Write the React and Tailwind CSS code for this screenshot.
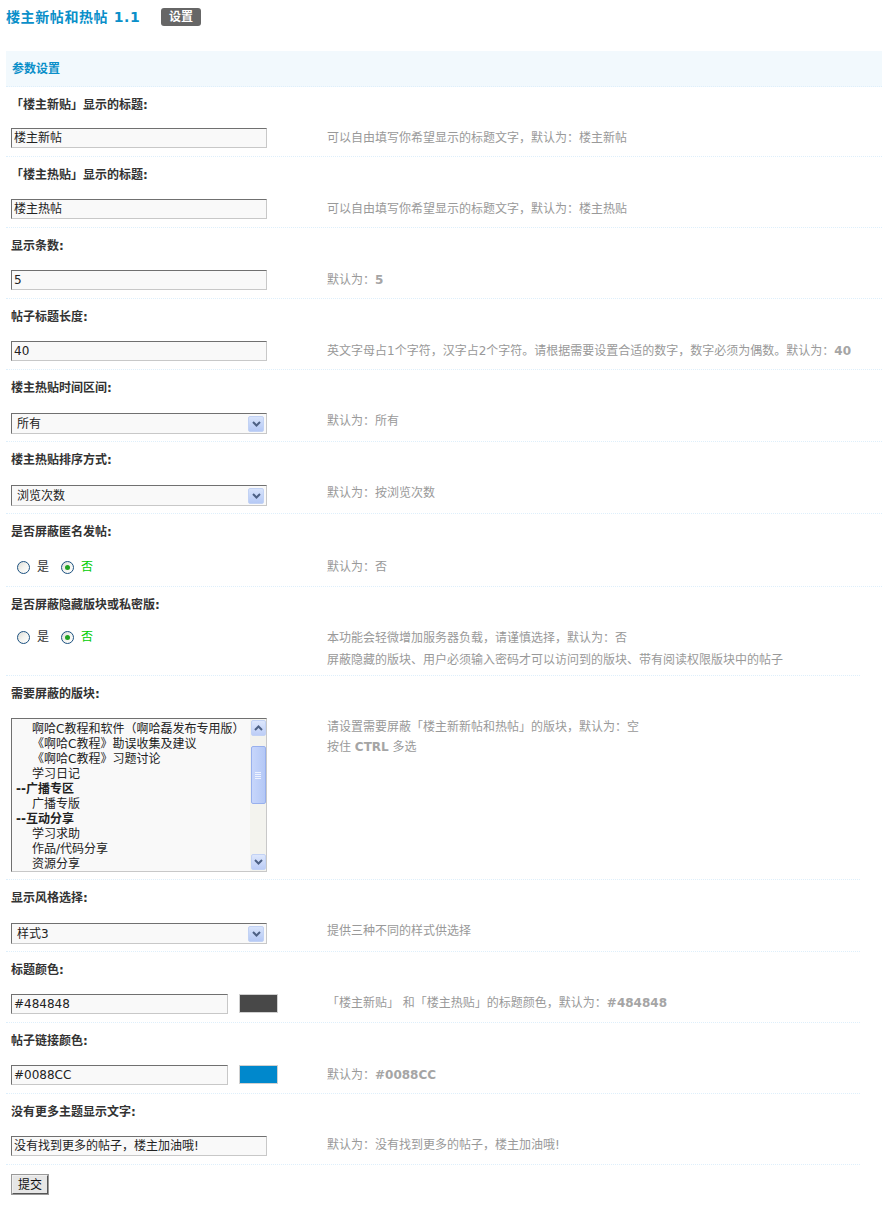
import React from "react";

const FONT = "[font-family:'DejaVu_Sans','Noto_Sans_CJK_SC',sans-serif]";

function Label({ children }) {
  return (
    <div className="h-[35px] flex items-center pl-[5px] font-bold text-[#333] text-[12px]">
      {children}
    </div>
  );
}

function TextInput({ value, w = "w-[256px]" }) {
  return (
    <div
      className={`${w} h-[20px] bg-[#f9f9f9] border border-t-[#707070] border-l-[#707070] border-b-[#c8c8c8] border-r-[#c8c8c8] pl-[2px] flex items-center text-[12px] text-[#222] leading-none overflow-hidden whitespace-nowrap`}
    >
      {value}
    </div>
  );
}

function SelectBox({ value }) {
  return (
    <div className="w-[256px] h-[21px] bg-[#f9f9f9] border border-t-[#707070] border-l-[#707070] border-b-[#c8c8c8] border-r-[#c8c8c8] flex items-center justify-between text-[12px] text-[#222]">
      <span className="pl-[5px]">{value}</span>
      <span className="mr-[2px] w-[16px] h-[16px] rounded-[2px] bg-gradient-to-b from-[#d7e3fb] to-[#b5c9f5] border border-[#c2d2f4] flex items-center justify-center">
        <svg width="9" height="6" viewBox="0 0 9 6">
          <path d="M1 1 L4.5 4.5 L8 1" stroke="#4d6185" strokeWidth="2" fill="none" />
        </svg>
      </span>
    </div>
  );
}

function Radio({ checked }) {
  return (
    <span className="w-[13px] h-[13px] rounded-full border border-[#1c5180] bg-gradient-to-br from-[#dcdcd6] via-[#f4f4f0] to-white flex items-center justify-center">
      {checked && <span className="w-[5px] h-[5px] rounded-full bg-[#21a121]" />}
    </span>
  );
}

function Radios() {
  return (
    <div className="flex items-center text-[12px] pl-[6px]">
      <Radio />
      <span className="ml-[7px] text-[#333]">是</span>
      <span className="ml-[12px]" />
      <Radio checked />
      <span className="ml-[7px] text-[#00cc00]">否</span>
    </div>
  );
}

function Row({ label, left, right, h, lpad, rpad, narrow, lh = "leading-[22px]" }) {
  return (
    <div className={narrow ? "w-[854px]" : "w-[876px]"}>
      <Label>{label}</Label>
      <div className={`flex border-b border-dotted border-[#deeffb] ${h}`}>
        <div className={`w-[316px] pl-[5px] ${lpad}`}>{left}</div>
        <div className={`flex-1 pl-[5px] text-[12px] text-[#999] ${lh} ${rpad}`}>{right}</div>
      </div>
    </div>
  );
}

const Num = ({ children }) => <span className="font-bold text-[#a5a5a5]">{children}</span>;

const listOptions = [
  { t: "啊哈C教程和软件（啊哈磊发布专用版）" },
  { t: "《啊哈C教程》勘误收集及建议" },
  { t: "《啊哈C教程》习题讨论" },
  { t: "学习日记" },
  { t: "--广播专区", b: true },
  { t: "广播专版" },
  { t: "--互动分享", b: true },
  { t: "学习求助" },
  { t: "作品/代码分享" },
  { t: "资源分享" },
];

function ListBox() {
  return (
    <div className="w-[256px] h-[154px] bg-[#f9f9f9] border border-t-[#707070] border-l-[#707070] border-b-[#c8c8c8] border-r-[#c8c8c8] flex">
      <div className="flex-1 pt-[3px] overflow-hidden">
        {listOptions.map((o, i) => (
          <div
            key={i}
            className={`h-[15px] leading-[15px] text-[12px] whitespace-nowrap text-[#222] ${o.b ? "font-bold pl-[4px]" : "pl-[20px]"}`}
          >
            {o.t}
          </div>
        ))}
      </div>
      <div className="w-[16px] h-full bg-[#f3f3ee] flex flex-col items-center">
        <div className="w-[15px] h-[16px] mt-[1px] rounded-[2px] bg-gradient-to-b from-[#dde7fc] to-[#bccdf6] border border-[#c2d2f4] flex items-center justify-center">
          <svg width="9" height="6" viewBox="0 0 9 6">
            <path d="M1 5 L4.5 1.5 L8 5" stroke="#4d6185" strokeWidth="2" fill="none" />
          </svg>
        </div>
        <div className="w-[15px] h-[58px] mt-[10px] rounded-[2px] bg-gradient-to-r from-[#c7d6fb] to-[#b4c8f6] border border-[#98b0ed] flex flex-col items-center justify-center gap-[1px]">
          <span className="w-[6px] h-[1px] bg-[#eef3ff]" />
          <span className="w-[6px] h-[1px] bg-[#eef3ff]" />
          <span className="w-[6px] h-[1px] bg-[#eef3ff]" />
          <span className="w-[6px] h-[1px] bg-[#eef3ff]" />
        </div>
        <div className="flex-1" />
        <div className="w-[15px] h-[16px] mb-[1px] rounded-[2px] bg-gradient-to-b from-[#dde7fc] to-[#bccdf6] border border-[#c2d2f4] flex items-center justify-center">
          <svg width="9" height="6" viewBox="0 0 9 6">
            <path d="M1 1 L4.5 4.5 L8 1" stroke="#4d6185" strokeWidth="2" fill="none" />
          </svg>
        </div>
      </div>
    </div>
  );
}

function ColorInput({ value, color }) {
  return (
    <div className="flex items-start">
      <TextInput value={value} w="w-[217px]" />
      <div className={`ml-[11px] w-[39px] h-[19px] border border-[#d0d0d0] ${color}`} />
    </div>
  );
}

export default function App() {
  return (
    <div className={`${FONT} bg-white w-[882px] min-h-[1216px] text-[12px]`}>
      <div className="h-[51px] pl-[6px] pt-[8px] flex items-start">
        <span className="w-[134px] text-[14px] tracking-[0.6px] font-bold text-[#0a8fc9] leading-[18px] whitespace-nowrap">
          楼主新帖和热帖 1.1
        </span>
        <span className="ml-[21px] w-[40px] h-[18px] rounded-[3px] bg-[#666] text-white font-bold text-[12px] leading-[18px] text-center">
          设置
        </span>
      </div>
      <div className="ml-[6px]">
        <div className="w-[876px] h-[36px] bg-[#f2f9fd] border-b border-dotted border-[#deeffb] flex items-center pl-[6px] font-bold text-[#0a8fc9]">
          参数设置
        </div>

        <Row
          label="「楼主新贴」显示的标题:"
          h="h-[35px]"
          lpad="pt-[6px]"
          rpad="pt-[5px]"
          left={<TextInput value="楼主新帖" />}
          right="可以自由填写你希望显示的标题文字，默认为：楼主新帖"
        />
        <Row
          label="「楼主热贴」显示的标题:"
          h="h-[36px]"
          lpad="pt-[7px]"
          rpad="pt-[6px]"
          left={<TextInput value="楼主热帖" />}
          right="可以自由填写你希望显示的标题文字，默认为：楼主热贴"
        />
        <Row
          label="显示条数:"
          h="h-[36px]"
          lpad="pt-[7px]"
          rpad="pt-[6px]"
          left={<TextInput value="5" />}
          right={<>默认为：<Num>5</Num></>}
        />
        <Row
          label="帖子标题长度:"
          h="h-[36px]"
          lpad="pt-[7px]"
          rpad="pt-[6px]"
          left={<TextInput value="40" />}
          right={<>英文字母占1个字符，汉字占2个字符。请根据需要设置合适的数字，数字必须为偶数。默认为：<Num>40</Num></>}
        />
        <Row
          label="楼主热贴时间区间:"
          h="h-[37px]"
          lpad="pt-[8px]"
          rpad="pt-[5px]"
          left={<SelectBox value="所有" />}
          right="默认为：所有"
        />
        <Row
          label="楼主热贴排序方式:"
          h="h-[37px]"
          lpad="pt-[8px]"
          rpad="pt-[5px]"
          left={<SelectBox value="浏览次数" />}
          right="默认为：按浏览次数"
        />
        <Row
          label="是否屏蔽匿名发帖:"
          h="h-[38px]"
          lpad="pt-[9px]"
          rpad="pt-[7px]"
          left={<Radios />}
          right="默认为：否"
        />
        <Row
          narrow
          label="是否屏蔽隐藏版块或私密版:"
          h="h-[54px]"
          lpad="pt-[6px]"
          rpad="pt-[5px]"
          left={<Radios />}
          right={
            <>
              <div>本功能会轻微增加服务器负载，请谨慎选择，默认为：否</div>
              <div>屏蔽隐藏的版块、用户必须输入密码才可以访问到的版块、带有阅读权限版块中的帖子</div>
            </>
          }
        />
        <Row
          narrow
          label="需要屏蔽的版块:"
          h="h-[169px]"
          lpad="pt-[7px]"
          rpad="pt-[6px]"
          lh="leading-[20px]"
          left={<ListBox />}
          right={
            <>
              <div>请设置需要屏蔽「楼主新新帖和热帖」的版块，默认为：空</div>
              <div>按住 <Num>CTRL</Num> 多选</div>
            </>
          }
        />
        <Row
          narrow
          label="显示风格选择:"
          h="h-[37px]"
          lpad="pt-[8px]"
          rpad="pt-[5px]"
          left={<SelectBox value="样式3" />}
          right="提供三种不同的样式供选择"
        />
        <Row
          narrow
          label="标题颜色:"
          h="h-[36px]"
          lpad="pt-[7px]"
          rpad="pt-[5px]"
          left={<ColorInput value="#484848" color="bg-[#484848]" />}
          right={<>「楼主新贴」 和「楼主热贴」的标题颜色，默认为：<Num>#484848</Num></>}
        />
        <Row
          narrow
          label="帖子链接颜色:"
          h="h-[36px]"
          lpad="pt-[7px]"
          rpad="pt-[6px]"
          left={<ColorInput value="#0088CC" color="bg-[#0088cc]" />}
          right={<>默认为：<Num>#0088CC</Num></>}
        />
        <Row
          narrow
          label="没有更多主题显示文字:"
          h="h-[36px]"
          lpad="pt-[7px]"
          rpad="pt-[5px]"
          left={<TextInput value="没有找到更多的帖子，楼主加油哦!" />}
          right="默认为：没有找到更多的帖子，楼主加油哦!"
        />
        <div className="pt-[10px] pl-[6px]">
          <div className="w-[36px] h-[19px] bg-[#e6e6e6] border border-t-[#f0f0f0] border-l-[#f0f0f0] border-b-[#555] border-r-[#555] outline outline-1 outline-[#999] flex items-center justify-center text-[12px] text-[#111]">
            提交
          </div>
        </div>
      </div>
    </div>
  );
}
